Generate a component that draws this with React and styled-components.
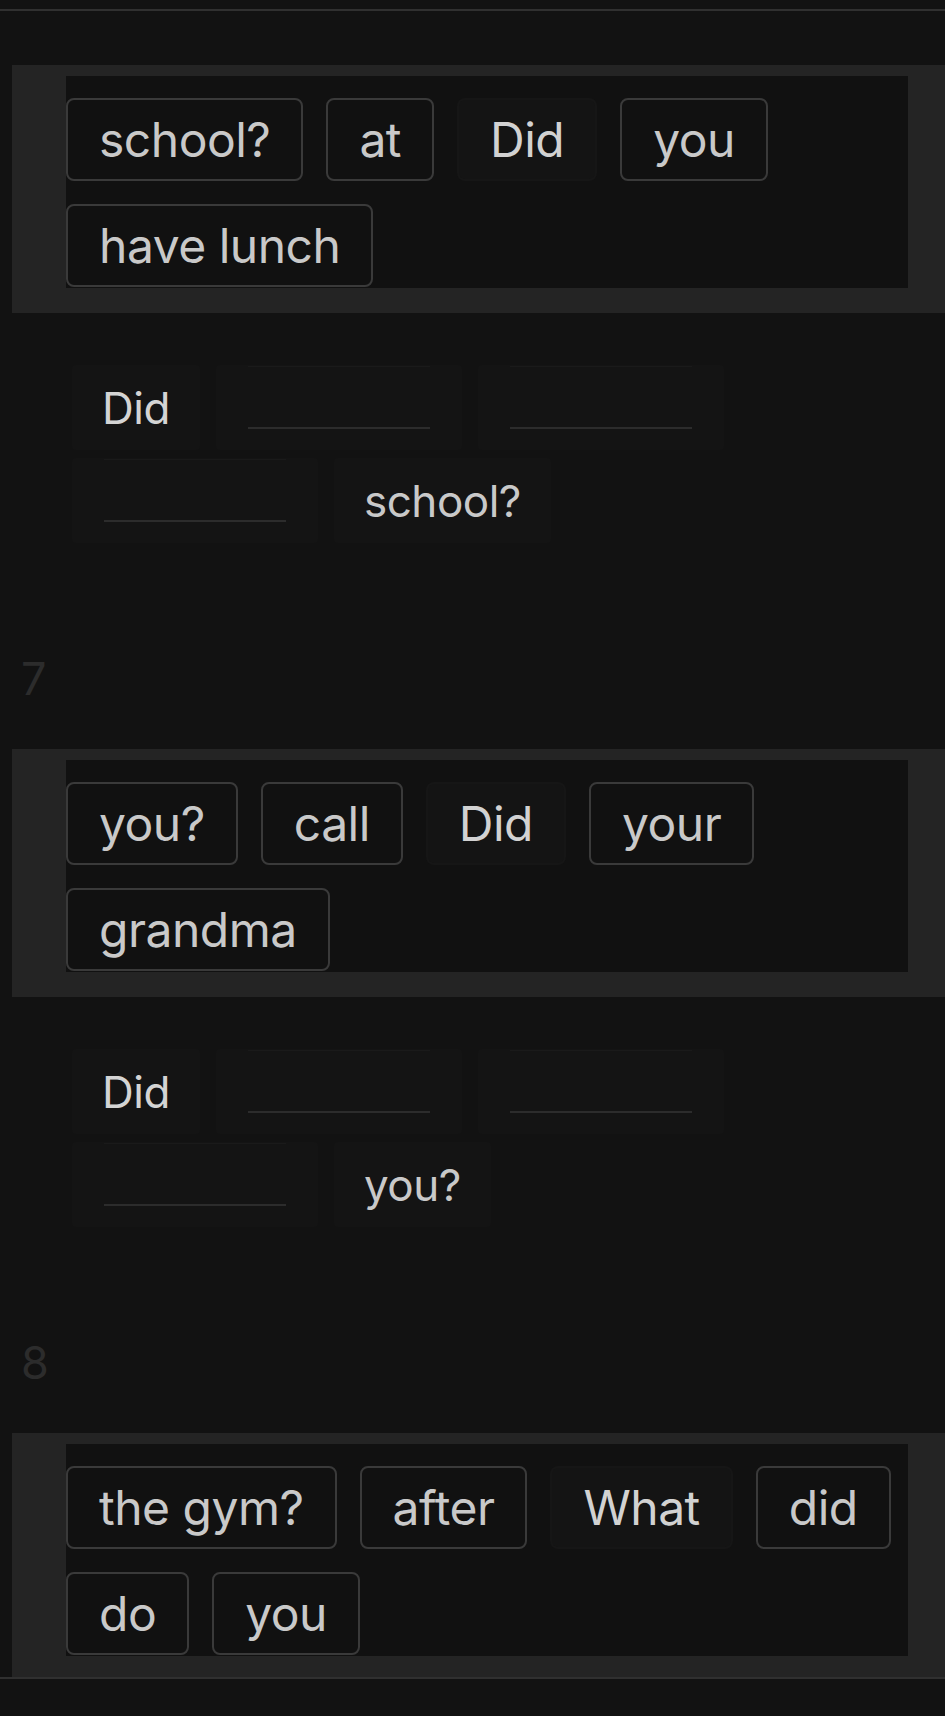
import React from 'react';
import styled, {createGlobalStyle} from "styled-components";

const GlobalStyle = createGlobalStyle`
  html, body {
    margin: 0;
    padding: 0;
    background: #121212;
  }
  body {
    font-family: Inter, "Noto Sans", "Liberation Sans", sans-serif;
    color: #c9c9c9;
  }
`;

const Page = styled.div`
  width: 945px;
  height: 1716px;
  padding-top: 9px;
  box-sizing: border-box;
  background: #121212;
  overflow: hidden;
`;

const Scroller = styled.div`
  height: 1666px;
  border-top: 2px solid #303030;
  border-bottom: 2px solid #303030;
  overflow: hidden;
`;

const List = styled.div`
  padding-top: 54px;
`;

const Section = styled.section`
  display: flex;
  flex-direction: column;
`;

const Number = styled.div`
  margin-left: 21px;
  margin-bottom: 48px;
  font-size: 45px;
  line-height: 45px;
  color: #2c2c2c;
`;

const Pool = styled.div`
  margin-left: 12px;
  background: #242424;
  padding: 11px 37px 25px 54px;
`;

const PoolInner = styled.div`
  background: #111111;
  height: 212px;
  box-sizing: border-box;
  padding-top: 22px;
  display: flex;
  flex-wrap: wrap;
  align-content: flex-start;
  gap: 23px;
`;

const Chip = styled.button`
  height: 83px;
  box-sizing: border-box;
  padding: 0 31px;
  border-radius: 8px;
  border: 2px solid ${({$used}) => $used ? '#161616' : '#3a3a3a'};
  background: ${({$used}) => $used ? '#141414' : '#111111'};
  color: ${({$used}) => $used ? '#d2d2d2' : '#c9c9c9'};
  font-family: inherit;
  font-size: 48px;
  letter-spacing: -0.5px;
  line-height: 1;
  white-space: nowrap;
  cursor: pointer;
`;

const Answer = styled.div`
  margin: 52px 0 113px 72px;
  max-width: 760px;
  display: flex;
  flex-wrap: wrap;
  gap: 8px 16px;
`;

const Word = styled.div`
  height: 85px;
  box-sizing: border-box;
  padding: 0 30px;
  display: flex;
  align-items: center;
  background: #141414;
  border-radius: 4px;
  font-size: 44px;
  letter-spacing: -0.5px;
  color: ${({$first}) => $first ? '#d4d4d4' : '#c9c9c9'};
  white-space: nowrap;
`;

const Slot = styled.div`
  height: 85px;
  box-sizing: border-box;
  padding: 1px 32px 0;
  background: #141414;
  border-radius: 4px;
`;

const Blank = styled.div`
  width: 182px;
  height: 63px;
  box-sizing: border-box;
  border-top: 1px solid #1a1a1a;
  border-bottom: 2px solid #2c2c2c;
`;

const sections = [
    {
        pool: [
            {t: 'school?'}, {t: 'at'}, {t: 'Did', used: true}, {t: 'you'}, {t: 'have lunch'},
        ],
        answer: ['Did', null, null, null, 'school?'],
    },
    {
        num: 7,
        pool: [
            {t: 'you?'}, {t: 'call'}, {t: 'Did', used: true}, {t: 'your'}, {t: 'grandma'},
        ],
        answer: ['Did', null, null, null, 'you?'],
    },
    {
        num: 8,
        pool: [
            {t: 'the gym?'}, {t: 'after'}, {t: 'What', used: true}, {t: 'did'}, {t: 'do'}, {t: 'you'},
        ],
        // answer row of this one sits below the fold
        answer: [],
    },
];

const App = () => {
    return (<>
        <GlobalStyle/>
        <Page>
            <Scroller>
                <List>
                    {sections.map((s, i) => (
                        <Section key={i}>
                            {s.num && <Number>{s.num}</Number>}
                            <Pool>
                                <PoolInner>
                                    {s.pool.map((c, j) => (
                                        <Chip key={j} $used={c.used}>{c.t}</Chip>
                                    ))}
                                </PoolInner>
                            </Pool>
                            {s.answer.length > 0 && (
                                <Answer>
                                    {s.answer.map((w, j) => w
                                        ? <Word key={j} $first={j === 0}>{w}</Word>
                                        : <Slot key={j}><Blank/></Slot>
                                    )}
                                </Answer>
                            )}
                        </Section>
                    ))}
                </List>
            </Scroller>
        </Page>
    </>);
};

export default App;
